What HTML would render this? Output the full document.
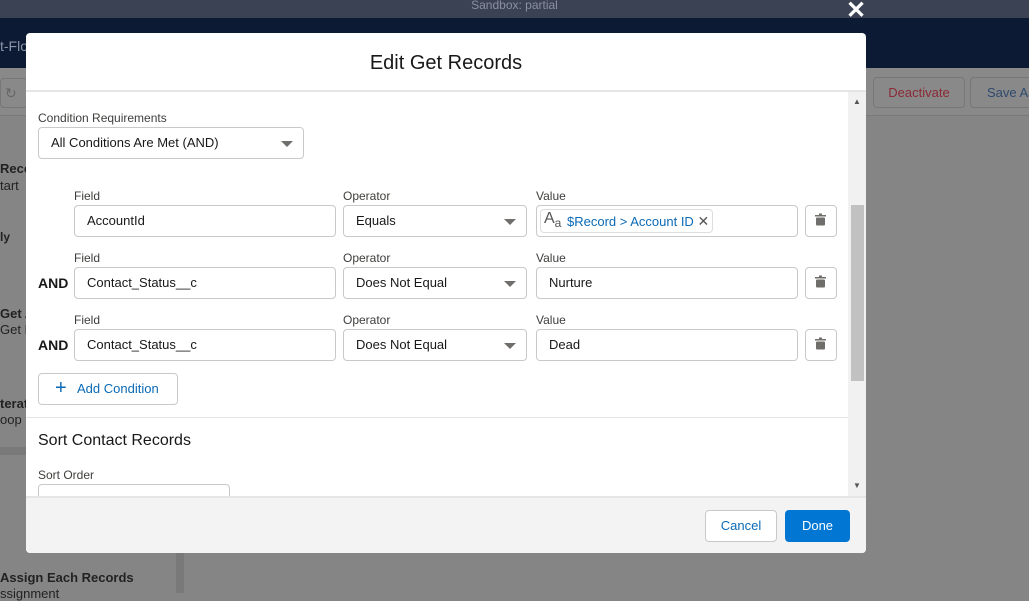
<!DOCTYPE html>
<html><head><style>
*{box-sizing:border-box;margin:0;padding:0}
body{width:1029px;height:593px;overflow:hidden;background:#868586;font-family:"Liberation Sans",sans-serif;position:relative;color:#181818}
.abs{position:absolute}
.inp{position:absolute;height:32px;border:1px solid #c9c9c9;border-radius:4px;background:#fff;font-size:13px;padding-left:12px;line-height:30px;color:#181818}
.lbl{position:absolute;font-size:12px;color:#3e3e3c}
.caret{position:absolute;right:10px;top:13px;width:0;height:0;border-left:6px solid transparent;border-right:6px solid transparent;border-top:6px solid #706e6b}
.trash{position:absolute;width:32px;height:32px;border:1px solid #c9c9c9;border-radius:4px;background:#fff}
.and{position:absolute;font-weight:bold;font-size:14px}
</style></head><body>
<div class="abs" style="left:0;top:0;width:1029px;height:18px;background:#3a4254;color:#8a90a0;font-size:12px;text-align:center;line-height:10px">Sandbox: partial</div>
<div class="abs" style="left:0;top:18px;width:1029px;height:50px;background:#0d1a33"></div>
<div class="abs" style="left:0;top:38px;color:#8a95a8;font-size:14px">t-Flo</div>
<div class="abs" style="left:0;top:68px;width:1029px;height:48px;background:#8a898a;border-bottom:1px solid #7a797a"></div>
<div class="abs" style="left:873px;top:77px;width:92px;height:31px;border:1px solid #777;border-radius:4px;color:#8a2a35;font-size:13px;text-align:center;line-height:29px">Deactivate</div>
<div class="abs" style="left:970px;top:77px;width:80px;height:31px;border:1px solid #777;border-radius:4px;color:#2d4a6e;font-size:13px;padding-left:16px;line-height:29px">Save As</div>
<div class="abs" style="left:0;top:78px;width:28px;height:30px;border:1px solid #777;border-radius:4px;color:#666;font-size:14px;line-height:28px;padding-left:4px">↻</div>
<div class="abs" style="left:176px;top:116px;width:8px;height:477px;background:#7a797a"></div>
<div class="abs" style="left:0;top:447px;width:180px;height:8px;background:#7a797a"></div>
<div class="abs" style="left:0;top:161px;font-size:13px;font-weight:bold;color:#222">Recor</div>
<div class="abs" style="left:0;top:178px;font-size:13px;color:#222">tart</div>
<div class="abs" style="left:0;top:230px;font-size:12px;font-weight:bold;color:#222">ly</div>
<div class="abs" style="left:0;top:306px;font-size:13px;font-weight:bold;color:#222">Get A</div>
<div class="abs" style="left:0;top:322px;font-size:13px;color:#222">Get R</div>
<div class="abs" style="left:0;top:396px;font-size:13px;font-weight:bold;color:#222">terat</div>
<div class="abs" style="left:0;top:412px;font-size:13px;color:#222">oop</div>
<div class="abs" style="left:0;top:570px;font-size:13px;font-weight:bold;color:#222">Assign Each Records</div>
<div class="abs" style="left:0;top:586px;font-size:13px;color:#222">ssignment</div>
<div class="abs" style="left:846px;top:-4px;color:#fff;font-size:24px;font-weight:bold">✕</div>

<div class="abs" style="left:26px;top:33px;width:840px;height:520px;background:#fff;border-radius:4px;overflow:hidden">
 <div class="abs" style="left:0;top:0;width:840px;height:59px;border-bottom:2px solid #e5e5e5;text-align:center;font-size:20px;line-height:60px;color:#181818">Edit Get Records</div>
 <div class="abs" style="left:822px;top:59px;width:18px;height:405px;background:#f1f1f1"></div>
 <div class="abs" style="left:825px;top:172px;width:13px;height:176px;background:#c1c1c1"></div>
 <div class="abs" style="left:827px;top:64px;font-size:8px;color:#555">▲</div>
 <div class="abs" style="left:827px;top:448px;font-size:8px;color:#555">▼</div>
 <div class="lbl" style="left:12px;top:78px">Condition Requirements</div>
 <div class="inp" style="left:12px;top:94px;width:266px">All Conditions Are Met (AND)<div class="caret"></div></div>

 <div class="lbl" style="left:48px;top:156px">Field</div>
 <div class="lbl" style="left:317px;top:156px">Operator</div>
 <div class="lbl" style="left:510px;top:156px">Value</div>
 <div class="inp" style="left:48px;top:172px;width:262px">AccountId</div>
 <div class="inp" style="left:317px;top:172px;width:184px">Equals<div class="caret"></div></div>
 <div class="inp" style="left:510px;top:172px;width:262px;padding-left:3px"><div style="position:absolute;left:3px;top:3px;width:173px;height:24px;border:1px solid #ddd;border-radius:4px;line-height:22px;color:#0b6ab5;padding-left:26px"><span style="position:absolute;left:3px;top:-2px;color:#555;font-size:16px">A<sub style="font-size:12px">a</sub></span>$Record &gt; Account ID <span style="color:#555;font-size:14px">✕</span></div></div>
 <div class="trash" style="left:779px;top:172px"></div>

 <div class="lbl" style="left:48px;top:218px">Field</div>
 <div class="lbl" style="left:317px;top:218px">Operator</div>
 <div class="lbl" style="left:510px;top:218px">Value</div>
 <div class="and" style="left:12px;top:242px">AND</div>
 <div class="inp" style="left:48px;top:234px;width:262px">Contact_Status__c</div>
 <div class="inp" style="left:317px;top:234px;width:184px">Does Not Equal<div class="caret"></div></div>
 <div class="inp" style="left:510px;top:234px;width:262px">Nurture</div>
 <div class="trash" style="left:779px;top:234px"></div>

 <div class="lbl" style="left:48px;top:280px">Field</div>
 <div class="lbl" style="left:317px;top:280px">Operator</div>
 <div class="lbl" style="left:510px;top:280px">Value</div>
 <div class="and" style="left:12px;top:304px">AND</div>
 <div class="inp" style="left:48px;top:296px;width:262px">Contact_Status__c</div>
 <div class="inp" style="left:317px;top:296px;width:184px">Does Not Equal<div class="caret"></div></div>
 <div class="inp" style="left:510px;top:296px;width:262px">Dead</div>
 <div class="trash" style="left:779px;top:296px"></div>

 <div class="abs" style="left:12px;top:340px;width:140px;height:32px;border:1px solid #c9c9c9;border-radius:4px;color:#0b6ab5;font-size:13px;line-height:30px;padding-left:38px"><span style="position:absolute;left:16px;top:-1px;font-size:20px">+</span>Add Condition</div>
 <div class="abs" style="left:0;top:384px;width:822px;height:1px;background:#e5e5e5"></div>
 <div class="abs" style="left:12px;top:399px;font-size:16px">Sort Contact Records</div>
 <div class="lbl" style="left:12px;top:435px">Sort Order</div>
 <div class="abs" style="left:12px;top:451px;width:192px;height:20px;border:1px solid #c9c9c9;border-bottom:none;border-radius:4px 4px 0 0"></div>
 <div class="abs" style="left:0;top:463px;width:840px;height:57px;background:#f3f3f3;border-top:2px solid #e5e5e5"></div>
 <div class="abs" style="left:679px;top:477px;width:72px;height:32px;border:1px solid #c9c9c9;border-radius:4px;background:#fff;color:#0b6ab5;font-size:13px;text-align:center;line-height:30px">Cancel</div>
 <div class="abs" style="left:759px;top:477px;width:65px;height:32px;border-radius:4px;background:#0176d3;color:#fff;font-size:13px;text-align:center;line-height:32px">Done</div>
</div>
<svg class="abs" style="left:0;top:0" width="1029" height="593">
 <g fill="#706e6b">
 <g transform="translate(815,215)"><rect x="0" y="0" width="11" height="1.5"/><rect x="4" y="-1.5" width="3" height="1.5"/><rect x="1" y="2.5" width="9" height="8" rx="1"/></g>
 <g transform="translate(815,277)"><rect x="0" y="0" width="11" height="1.5"/><rect x="4" y="-1.5" width="3" height="1.5"/><rect x="1" y="2.5" width="9" height="8" rx="1"/></g>
 <g transform="translate(815,339)"><rect x="0" y="0" width="11" height="1.5"/><rect x="4" y="-1.5" width="3" height="1.5"/><rect x="1" y="2.5" width="9" height="8" rx="1"/></g>
 </g>
</svg>
</body></html>
